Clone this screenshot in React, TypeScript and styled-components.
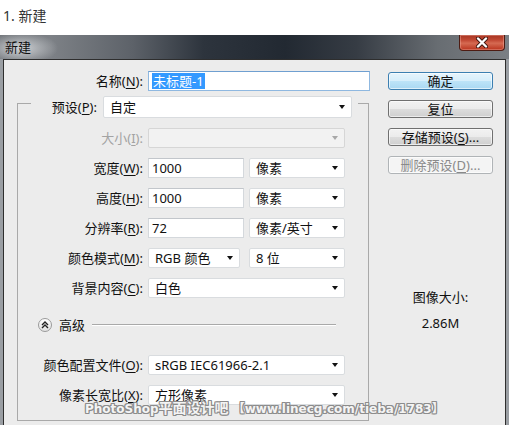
import styled, { createGlobalStyle } from "styled-components";

const GlobalStyle = createGlobalStyle`
  html, body {
    margin: 0;
    padding: 0;
    background: #fff;
    overflow: hidden;
  }
  body {
    font-family: "Noto Sans", "Noto Sans CJK SC", sans-serif;
  }
`;

const Page = styled.div`
  position: relative;
  width: 509px;
  height: 425px;
  overflow: hidden;
`;

const Heading = styled.div`
  box-sizing: border-box;
  height: 35px;
  padding: 6px 0 0 3px;
  font-size: 14px;
  line-height: 20px;
  color: #333;
`;

const Window = styled.div`
  width: 509px;
  background: #9a9ea3;
`;

const TitleBar = styled.div`
  height: 24px;
  display: flex;
  justify-content: space-between;
  align-items: flex-start;
  background:
    radial-gradient(ellipse 38px 16px at 20px 55%, rgba(215, 218, 221, 0.95), rgba(215, 218, 221, 0) 100%),
    linear-gradient(
      to right,
      #6e7277 0%,
      #7d8186 10%,
      #5d6269 26%,
      #2d343d 40%,
      #222932 56%,
      #363c44 70%,
      #686d72 86%,
      #7b7f84 100%
    );
`;

const Title = styled.span`
  padding: 3px 0 0 5px;
  font-size: 13px;
  line-height: 18px;
  color: #111;
`;

const CloseButton = styled.div`
  box-sizing: border-box;
  width: 46px;
  height: 16px;
  margin-right: 4px;
  display: flex;
  align-items: center;
  justify-content: center;
  border: 1px solid #4e1c13;
  border-top: none;
  border-radius: 0 0 4px 4px;
  background: linear-gradient(#a63522 0%, #c24a35 35%, #d56a52 55%, #b9331d 100%);
  box-shadow: inset 0 0 0 1px rgba(255, 200, 190, 0.35);
`;

const Client = styled.div`
  box-sizing: border-box;
  margin: 0 3px;
  height: 390px;
  border: 1px solid #2e2e2e;
  background: #ececec;
  display: flex;
  padding-top: 11px;
  color: #111;
  font-size: 13px;
`;

const LeftColumn = styled.div`
  width: 366px;
  display: flex;
  flex-direction: column;
`;

const RightColumn = styled.div`
  width: 105px;
  margin-left: 18px;
  padding-top: 1px;
  display: flex;
  flex-direction: column;
  gap: 10px;
`;

const Row = styled.div`
  display: flex;
  align-items: center;
  gap: 5px;
  height: 20px;
`;

const Label = styled.span<{ $width: number; $disabled?: boolean }>`
  flex: none;
  width: ${(p) => p.$width}px;
  text-align: right;
  line-height: 18px;
  white-space: nowrap;
  color: ${(p) => (p.$disabled ? "#a3a3a3" : "#111")};
  u {
    text-decoration-thickness: 1px;
    text-underline-offset: 2px;
  }
`;

const TextBox = styled.div<{ $width: number; $focused?: boolean }>`
  box-sizing: border-box;
  flex: none;
  width: ${(p) => p.$width}px;
  height: 20px;
  padding: 0 3px;
  display: flex;
  align-items: center;
  background: #fff;
  border: 1px solid ${(p) => (p.$focused ? "#8fb8e0" : "#d4d8dc")};
  border-top-color: ${(p) => (p.$focused ? "#6f9fd0" : "#c2c6cb")};
  line-height: 16px;
  white-space: nowrap;
`;

const Selected = styled.span`
  background: #3399ff;
  color: #fff;
  padding: 0 1px;
`;

const SelectBox = styled.div<{ $width: number; $height?: number; $disabled?: boolean; $offset?: number }>`
  box-sizing: border-box;
  flex: none;
  width: ${(p) => p.$width}px;
  height: ${(p) => p.$height ?? 20}px;
  margin-left: ${(p) => p.$offset ?? 0}px;
  padding: 0 6px 0 6px;
  display: flex;
  align-items: center;
  justify-content: space-between;
  background: ${(p) => (p.$disabled ? "#f2f2f2" : "#fff")};
  border: 1px solid ${(p) => (p.$disabled ? "#d6d6d6" : "#d9dcdf")};
  border-radius: 2px;
  line-height: 16px;
  white-space: nowrap;
`;

const Arrow = styled.span<{ $disabled?: boolean }>`
  width: 0;
  height: 0;
  border-left: 3.5px solid transparent;
  border-right: 3.5px solid transparent;
  border-top: 4px solid ${(p) => (p.$disabled ? "#a8a8a8" : "#111")};
`;

const Group = styled.fieldset`
  box-sizing: border-box;
  width: 352px;
  margin: -3px 0 0 13px;
  padding: 0 0 15px 0;
  border: 1px solid #a9a9a9;
  min-inline-size: 0;
`;

const GroupLegend = styled.legend`
  margin-left: 13px;
  padding: 8px 6px 0 0;
  display: flex;
  align-items: center;
  gap: 6px;
`;

const Rows = styled.div`
  display: flex;
  flex-direction: column;
  gap: 10px;
  margin-top: 10px;
`;

const AdvancedRow = styled.div`
  display: flex;
  align-items: center;
  height: 20px;
  margin: 17px 32px 0 20px;
`;

const Toggle = styled.span`
  box-sizing: border-box;
  flex: none;
  width: 14px;
  height: 14px;
  border-radius: 50%;
  border: 1px solid #9a9a9a;
  background: linear-gradient(#ffffff, #e2e2e2);
  display: flex;
  align-items: center;
  justify-content: center;
`;

const AdvancedText = styled.span`
  margin-left: 7px;
  line-height: 18px;
`;

const Rule = styled.span`
  flex: 1;
  margin-left: 7px;
  height: 0;
  border-top: 1px solid #a9a9a9;
  border-bottom: 1px solid #fff;
`;

const LowerRows = styled(Rows)`
  margin-top: 20px;
`;

const Button = styled.div<{ $variant?: "default" | "disabled" }>`
  box-sizing: border-box;
  height: 18px;
  display: flex;
  align-items: center;
  justify-content: center;
  border-radius: 3px;
  font-size: 13px;
  line-height: 16px;
  white-space: nowrap;
  border: 1px solid
    ${(p) => (p.$variant === "default" ? "#3c7fb1" : p.$variant === "disabled" ? "#b0b4b7" : "#707070")};
  color: ${(p) => (p.$variant === "disabled" ? "#8a8a8a" : "#111")};
  background: ${(p) =>
    p.$variant === "default"
      ? "linear-gradient(#e6f4fc 0%, #d6eefb 50%, #bde4f8 50%, #a9d8f2 100%)"
      : p.$variant === "disabled"
      ? "#f4f4f4"
      : "linear-gradient(#f2f2f2 0%, #ebebeb 50%, #dddddd 50%, #cfcfcf 100%)"};
  box-shadow: inset 0 0 0 1px rgba(255, 255, 255, 0.6);
  u {
    text-underline-offset: 2px;
  }
`;

const SizeInfo = styled.div`
  margin-top: 105px;
  display: flex;
  flex-direction: column;
  align-items: center;
  gap: 10px;
  line-height: 16px;
`;

const Watermark = styled.div`
  position: absolute;
  left: 85px;
  top: 400px;
  font-family: "DejaVu Sans", "Noto Sans CJK SC", sans-serif;
  font-weight: bold;
  font-size: 12px;
  line-height: 16px;
  white-space: nowrap;
  color: #f4f4f4;
  text-shadow:
    1px 0 0 #8c8c8c,
    -1px 0 0 #8c8c8c,
    0 1px 0 #8c8c8c,
    0 -1px 0 #8c8c8c,
    1px 1px 0 #8c8c8c,
    -1px -1px 0 #8c8c8c,
    1px -1px 0 #8c8c8c,
    -1px 1px 0 #8c8c8c;
`;

const WatermarkCjk = styled.span`
  font-size: 14px;
`;

const CloseGlyph = () => (
  <svg width="14" height="11" viewBox="0 0 14 11">
    <path d="M3 1.5 L11 9.5 M11 1.5 L3 9.5" stroke="#3a120c" strokeWidth="4" strokeLinecap="round" />
    <path d="M3 1.5 L11 9.5 M11 1.5 L3 9.5" stroke="#fff" strokeWidth="2.4" strokeLinecap="round" />
  </svg>
);

const ChevronsUp = () => (
  <svg width="8" height="8" viewBox="0 0 8 8">
    <path d="M1 4 L4 1 L7 4 M1 7 L4 4 L7 7" fill="none" stroke="#222" strokeWidth="1.4" />
  </svg>
);

type SelectProps = { width: number; value?: string; disabled?: boolean; height?: number; offset?: number };

const Select = ({ width, value, disabled, height, offset }: SelectProps) => (
  <SelectBox $width={width} $disabled={disabled} $height={height} $offset={offset}>
    <span>{value}</span>
    <Arrow $disabled={disabled} />
  </SelectBox>
);

const FieldLabel = ({ text, mnemonic, disabled }: { text: string; mnemonic: string; disabled?: boolean }) => (
  <Label $width={125} $disabled={disabled}>
    {text}(<u>{mnemonic}</u>):
  </Label>
);

export default function App() {
  return (
    <Page>
      <GlobalStyle />
      <Heading>1. 新建</Heading>
      <Window>
        <TitleBar>
          <Title>新建</Title>
          <CloseButton>
            <CloseGlyph />
          </CloseButton>
        </TitleBar>
        <Client>
          <LeftColumn>
            <Row>
              <Label $width={139}>
                名称(<u>N</u>):
              </Label>
              <TextBox $width={222} $focused>
                <Selected>未标题-1</Selected>
              </TextBox>
            </Row>
            <Group>
              <GroupLegend>
                <Label $width={66}>
                  预设(<u>P</u>):
                </Label>
                <Select width={249} height={22} value="自定" />
              </GroupLegend>
              <Rows>
                <Row>
                  <FieldLabel text="大小" mnemonic="I" disabled />
                  <Select width={197} disabled />
                </Row>
                <Row>
                  <FieldLabel text="宽度" mnemonic="W" />
                  <TextBox $width={96}>1000</TextBox>
                  <Select width={96} value="像素" />
                </Row>
                <Row>
                  <FieldLabel text="高度" mnemonic="H" />
                  <TextBox $width={96}>1000</TextBox>
                  <Select width={96} value="像素" />
                </Row>
                <Row>
                  <FieldLabel text="分辨率" mnemonic="R" />
                  <TextBox $width={96}>72</TextBox>
                  <Select width={96} value="像素/英寸" />
                </Row>
                <Row>
                  <FieldLabel text="颜色模式" mnemonic="M" />
                  <Select width={92} value="RGB 颜色" />
                  <Select width={96} value="8 位" offset={4} />
                </Row>
                <Row>
                  <FieldLabel text="背景内容" mnemonic="C" />
                  <Select width={197} value="白色" />
                </Row>
              </Rows>
              <AdvancedRow>
                <Toggle>
                  <ChevronsUp />
                </Toggle>
                <AdvancedText>高级</AdvancedText>
                <Rule />
              </AdvancedRow>
              <LowerRows>
                <Row>
                  <FieldLabel text="颜色配置文件" mnemonic="O" />
                  <Select width={197} value="sRGB IEC61966-2.1" />
                </Row>
                <Row>
                  <FieldLabel text="像素长宽比" mnemonic="X" />
                  <Select width={197} value="方形像素" />
                </Row>
              </LowerRows>
            </Group>
          </LeftColumn>
          <RightColumn>
            <Button $variant="default">确定</Button>
            <Button>复位</Button>
            <Button>
              存储预设(<u>S</u>)...
            </Button>
            <Button $variant="disabled">
              删除预设(<u>D</u>)...
            </Button>
            <SizeInfo>
              <span>图像大小:</span>
              <span>2.86M</span>
            </SizeInfo>
          </RightColumn>
        </Client>
      </Window>
      <Watermark>
        PhotoShop<WatermarkCjk>平面设计吧</WatermarkCjk> 【www.linecg.com/tieba/1783】
      </Watermark>
    </Page>
  );
}
